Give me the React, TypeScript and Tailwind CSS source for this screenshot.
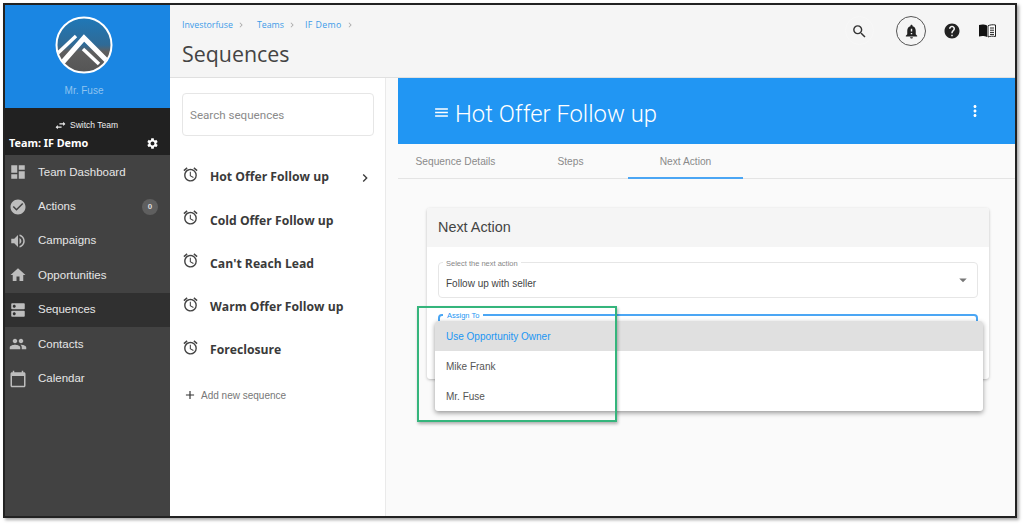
import React from "react";
import {
  MdDashboard, MdCheckCircle, MdVolumeUp, MdHome, MdDns, MdPeople, MdCalendarToday, MdSwapHoriz, MdSettings,
  MdOutlineAccessAlarm, MdChevronRight, MdSearch, MdNotificationImportant, MdHelp, MdMoreVert,
  MdArrowDropDown, MdAdd, MdMenu,
} from "react-icons/md";

const nav = [
  { label: "Team Dashboard", Icon: MdDashboard },
  { label: "Actions", Icon: MdCheckCircle, badge: "0" },
  { label: "Campaigns", Icon: MdVolumeUp },
  { label: "Opportunities", Icon: MdHome },
  { label: "Sequences", Icon: MdDns, active: true },
  { label: "Contacts", Icon: MdPeople },
  { label: "Calendar", Icon: MdCalendarToday },
];

const sequences = ["Hot Offer Follow up", "Cold Offer Follow up", "Can't Reach Lead", "Warm Offer Follow up", "Foreclosure"];

function Logo() {
  return (
    <svg width="58" height="58" viewBox="0 0 58 58">
      <defs>
        <linearGradient id="lg" x1="0" y1="0" x2="0" y2="1">
          <stop offset="0" stopColor="#1f78b8" />
          <stop offset="0.5" stopColor="#2f6a96" />
          <stop offset="0.62" stopColor="#5f5f5f" />
          <stop offset="1" stopColor="#555" />
        </linearGradient>
        <clipPath id="lc"><circle cx="29" cy="29" r="27" /></clipPath>
      </defs>
      <circle cx="29" cy="29" r="27.5" fill="url(#lg)" stroke="#fff" strokeWidth="2" />
      <g clipPath="url(#lc)" fill="none" stroke="#fff">
        <path d="M3 37 L21 20" strokeWidth="3.5" />
        <path d="M7 47 L29 22 L54 47" strokeWidth="5" />
        <path d="M28 33 L44 48" strokeWidth="3.5" />
      </g>
    </svg>
  );
}

function Book() {
  return (
    <svg width="17" height="14" viewBox="0 0 17 14">
      <path d="M0 1 C3 0 6 0.5 8 1.5 V13 C6 12 3 11.5 0 12.5 Z" fill="#111" />
      <path d="M9 1.8 C11 0.8 14 0.5 16.5 1 V12.5 C14 12 11 12 9 13 Z" fill="#fff" stroke="#222" strokeWidth="1" />
      <path d="M11 4 H15 M11 6.2 H15 M11 8.4 H15 M11 10.4 H15" stroke="#222" strokeWidth="1" />
    </svg>
  );
}

export default function App() {
  return (
    <div className="w-[1024px] h-[524px] bg-white pt-[3px] pl-[3px] overflow-hidden relative" style={{ fontFamily: "Roboto, sans-serif" }}>
      <div className="w-[1014px] h-[515px] border-2 border-[#222] shadow-[2px_2px_3px_rgba(0,0,0,0.35)] flex overflow-hidden bg-[#fafafa]">
        <aside className="w-[165px] shrink-0 flex flex-col bg-[#424242]">
          <div className="h-[103px] bg-[#1a86e3] flex flex-col items-center pt-[11px] pr-[7px]">
            <Logo />
            <div className="mt-[10px] text-[10px] leading-[14px] text-[#8fc3ef]" style={{ fontFamily: "'Liberation Sans', sans-serif" }}>Mr. Fuse</div>
          </div>
          <div className="h-[47px] bg-[#212121] text-white relative pt-[10px]">
            <div className="flex items-center justify-center gap-[3px] text-[8.5px] leading-[14px] pr-[3px] text-[#eee]" style={{ fontFamily: "'Liberation Sans', sans-serif" }}>
              <MdSwapHoriz size={13} /> Switch Team
            </div>
            <div className="flex items-center justify-between pl-[4px] pr-[11px] mt-[3px]">
              <span className="text-[10.8px] font-bold leading-[16px]" style={{ fontFamily: "'Noto Sans', sans-serif" }}>Team: IF Demo</span>
              <MdSettings size={13} />
            </div>
          </div>
          <nav className="flex flex-col" style={{ fontFamily: "'Liberation Sans', sans-serif" }}>
            {nav.map(({ label, Icon, badge, active }) => (
              <div key={label} className={`h-[34.4px] flex items-center pl-[4px] pr-[12px] text-[11.5px] text-[#e6e6e6] ${active ? "bg-[#303030]" : ""}`}>
                <Icon size={18} className="text-[#bdbdbd] shrink-0" />
                <span className="ml-[11px] flex-1">{label}</span>
                {badge && (
                  <span className="w-[16px] h-[16px] rounded-full bg-[#5f5f5f] text-[8px] font-bold flex items-center justify-center text-[#ddd]">{badge}</span>
                )}
              </div>
            ))}
          </nav>
        </aside>

        <div className="flex-1 min-w-0 flex flex-col">
          <header className="h-[73px] shrink-0 bg-[#f5f5f5] border-b border-[#e0e0e0] flex justify-between pl-[12px] pr-[19px]">
            <div className="pt-[13px]" style={{ fontFamily: "'Open Sans', sans-serif" }}>
              <div className="flex items-center text-[8.8px] leading-[14px] text-[#3c9be8]">
                <span>Investorfuse</span><MdChevronRight size={10} className="text-[#aaa] ml-[3px] mr-[11px]" />
                <span>Teams</span><MdChevronRight size={10} className="text-[#aaa] ml-[3px] mr-[8px]" />
                <span className="tracking-[0.4px]">IF Demo</span><MdChevronRight size={10} className="text-[#aaa] ml-[3px]" />
              </div>
              <div className="mt-[7px] text-[21.4px] leading-[30px] text-[#444]">Sequences</div>
            </div>
            <div className="flex items-start pt-[11px]">
              <div className="w-[29px] h-[29px] rounded-full border border-[#f8f8f8] flex items-center justify-center text-[#333]"><MdSearch size={17} className="mt-[2px]" /></div>
              <div className="ml-[22px] w-[30px] h-[30px] rounded-full border border-[#555] flex items-center justify-center text-[#222]"><MdNotificationImportant size={17} /></div>
              <div className="ml-[17px] h-[30px] flex items-center text-[#222]"><MdHelp size={18} /></div>
              <div className="ml-[18px] h-[30px] flex items-center text-[#111]"><Book /></div>
            </div>
          </header>

          <div className="flex-1 flex min-h-0">
            <section className="w-[216px] shrink-0 bg-white border-r border-[#eaeaea] pl-[12px] pr-[11px] pt-[15px]">
              <div className="h-[43px] border border-[#e6e6e6] rounded-[4px] flex items-center pl-[7px] pt-[2px] text-[11.6px] text-[#8a8a8a]">Search sequences</div>
              <ul className="mt-[20px]" style={{ fontFamily: "'Open Sans', sans-serif" }}>
                {sequences.map((s, i) => (
                  <li key={s} className="h-[43.2px] flex items-center text-[#3a3a3a]">
                    <MdOutlineAccessAlarm size={17} className="text-[#444] -mt-[6px] shrink-0" />
                    <span className="ml-[11px] flex-1 text-[12.2px] font-bold">{s}</span>
                    {i === 0 && <MdChevronRight size={16} className="mr-[1px]" />}
                  </li>
                ))}
              </ul>
              <div className="mt-[16px] flex items-center pl-[1px] text-[10px] text-[#777]" style={{ fontFamily: "'Liberation Sans', sans-serif" }}>
                <MdAdd size={14} className="text-[#333]" />
                <span className="ml-[4px]">Add new sequence</span>
              </div>
            </section>

            <main className="flex-1 min-w-0 pl-[12px] flex flex-col">
              <div className="h-[66px] shrink-0 bg-[#2196f3] flex items-center justify-between pl-[35px] pr-[31px] text-white pt-[6px]">
                <div className="flex items-center">
                  <MdMenu size={17} className="-mt-[4px]" />
                  <span className="ml-[5px] text-[23.8px] font-light leading-[30px]">Hot Offer Follow up</span>
                </div>
                <MdMoreVert size={18} className="-mt-[6px]" />
              </div>
              <div className="h-[35px] shrink-0 border-b border-[#e4e4e4] flex text-[10.2px] text-[#8a8a8a] bg-[#fafafa]" style={{ fontFamily: "'Liberation Sans', sans-serif" }}>
                <div className="w-[115px] flex items-center justify-center pt-[2px]">Sequence Details</div>
                <div className="w-[115px] flex items-center justify-center pt-[2px]">Steps</div>
                <div className="w-[115px] flex items-center justify-center pt-[2px] border-b-2 border-[#4ba6f4] h-[35px]">Next Action</div>
              </div>

              <div className="ml-[29px] mt-[29px] w-[562px] h-[171px] rounded-[3px] bg-white shadow-[0_1px_3px_rgba(0,0,0,0.25)] overflow-hidden">
                <div className="h-[39px] bg-[#f5f5f5] flex items-center pl-[11px] text-[14.4px] text-[#444]" style={{ fontFamily: "'Liberation Sans', sans-serif" }}>Next Action</div>
                <div className="px-[11px] pt-[15px]" style={{ fontFamily: "'Liberation Sans', sans-serif" }}>
                  <div className="relative h-[36px] border border-[#e6e6e6] rounded-[4px] flex items-center justify-between pl-[7px] pr-[5px] text-[10px] text-[#444]">
                    <span className="absolute -top-[4px] left-[4px] bg-white px-[3px] text-[7.5px] leading-[9px] text-[#888]">Select the next action</span>
                    <span className="pt-[7px]">Follow up with seller</span>
                    <MdArrowDropDown size={18} className="text-[#777]" />
                  </div>
                  <div className="relative mt-[16px] h-[36px] border-2 border-[#4ba6f4] rounded-[4px]">
                    <span className="absolute -top-[5px] left-[3px] bg-white px-[4px] text-[7.5px] leading-[9px] text-[#2196f3]">Assign To</span>
                  </div>
                </div>
              </div>
            </main>
          </div>
        </div>
      </div>

      {/* open dropdown menu */}
      <div className="absolute left-[435px] top-[321px] w-[548px] h-[90px] bg-white rounded-[3px] shadow-[0_2px_5px_rgba(0,0,0,0.4)] text-[10px] text-[#555]" style={{ fontFamily: "'Liberation Sans', sans-serif" }}>
        <div className="h-[30px] pt-[1px] bg-[#e0e0e0] flex items-center pl-[11px] text-[#2196f3] rounded-t-[3px]">Use Opportunity Owner</div>
        <div className="h-[30px] pt-[1px] flex items-center pl-[11px]">Mike Frank</div>
        <div className="h-[30px] pt-[1px] flex items-center pl-[11px]">Mr. Fuse</div>
      </div>

      {/* screenshot annotation */}
      <div className="absolute left-[417px] top-[306px] w-[200px] h-[116px] border-2 border-[#35b57c] shadow-[1px_2px_3px_rgba(0,0,0,0.3)]" />
    </div>
  );
}
